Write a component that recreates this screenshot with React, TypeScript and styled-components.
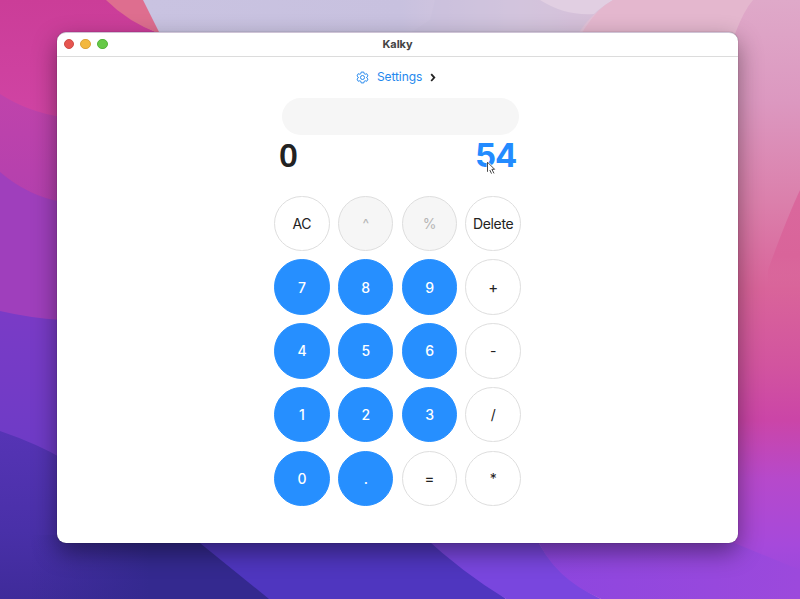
import React from 'react';
import styled, { createGlobalStyle, css } from 'styled-components';

const GlobalStyle = createGlobalStyle`
  *, *::before, *::after { box-sizing: border-box; }
  body {
    margin: 0;
    font-family: Inter, Roboto, 'Liberation Sans', sans-serif;
    color: #222;
  }
`;

const Desktop = styled.main`
  position: relative;
  isolation: isolate;
  width: 800px;
  height: 599px;
  padding: 32px 62px 56px 57px;
  overflow: hidden;
`;

const WallpaperSvg = styled.svg`
  position: absolute;
  inset: 0;
  z-index: -1;
`;

const Window = styled.section`
  display: flex;
  flex-direction: column;
  height: 511px;
  background: #fff;
  border-radius: 9px;
  border-top: 1px solid #cfc4d6;
  box-shadow: 0 0 1px rgba(0, 0, 0, 0.55), 0 9px 25px rgba(0, 0, 0, 0.42);
`;

const TitleBar = styled.header`
  display: grid;
  grid-template-columns: 1fr auto 1fr;
  align-items: center;
  height: 24px;
  padding: 0 6.5px 1px;
  border-bottom: 1px solid #dcdcdc;
`;

const Lights = styled.div`
  display: flex;
  gap: 6.6px;
`;

const Light = styled.span<{ $fill: string; $rim: string }>`
  width: 10.4px;
  height: 10.4px;
  border-radius: 50%;
  background: ${(p) => p.$fill};
  border: 0.5px solid ${(p) => p.$rim};
`;

const Title = styled.h1`
  margin: 0;
  font-size: 11px;
  font-weight: 700;
  line-height: 14px;
  letter-spacing: -0.1px;
  color: #444;
`;

const Calculator = styled.div`
  display: flex;
  flex-direction: column;
  width: 247px;
  margin: 0 0 0 217px;
  padding-top: 12px;
`;

const SettingsLink = styled.a`
  display: flex;
  align-items: center;
  height: 16px;
  margin-left: 82px;
  font-size: 12px;
  line-height: 16px;
  color: #2488ee;
`;

const SettingsLabel = styled.span`
  width: 46px;
  margin: 0 7px 0 8px;
  letter-spacing: -0.1px;
`;

const Expression = styled.div`
  width: 237px;
  height: 37px;
  margin: 13px 0 0 7.5px;
  border-radius: 18.5px;
  background: #f6f6f6;
`;

const Results = styled.div`
  display: flex;
  justify-content: space-between;
  align-items: center;
  height: 40px;
  padding: 0 5px 0 5px;
  font-size: 33px;
  line-height: 40px;
`;

const Current = styled.span`
  font-family: 'Noto Sans', sans-serif;
  font-weight: 600;
  color: #222;
`;

const Answer = styled.strong`
  position: relative;
  font-weight: 700;
  letter-spacing: -1.2px;
  color: #238bff;
`;

const PointerSvg = styled.svg`
  position: absolute;
  left: 11px;
  top: 26px;
`;

const Keypad = styled.div`
  display: grid;
  grid-template-columns: repeat(4, 55.6px);
  grid-auto-rows: 55.6px;
  gap: 8.2px;
  margin-top: 20.5px;
`;

type Tone = 'digit' | 'plain' | 'muted' | 'operator';

const tones = {
  digit: css`
    color: #fff;
    background: #268fff;
    border-color: #268fff;
    font-weight: 500;
  `,
  plain: css`
    color: #222;
    background: #fff;
  `,
  operator: css`
    color: #222;
    background: #fff;
    font-size: 15px;
    font-weight: 400;
  `,
  muted: css`
    color: #b5b5b5;
    background: #f6f6f6;
  `,
};

const Key = styled.button<{ $tone: Tone }>`
  display: flex;
  align-items: center;
  justify-content: center;
  padding: 1px 0 0;
  border: 1px solid #dedede;
  border-radius: 50%;
  font: 400 14px/18px Inter, Roboto, sans-serif;
  letter-spacing: -0.35px;
  white-space: nowrap;
  ${(p) => tones[p.$tone]}
`;

const keys: [string, Tone][] = [
  ['AC', 'plain'], ['^', 'muted'], ['%', 'muted'], ['Delete', 'plain'],
  ['7', 'digit'], ['8', 'digit'], ['9', 'digit'], ['+', 'operator'],
  ['4', 'digit'], ['5', 'digit'], ['6', 'digit'], ['-', 'plain'],
  ['1', 'digit'], ['2', 'digit'], ['3', 'digit'], ['/', 'plain'],
  ['0', 'digit'], ['.', 'digit'], ['=', 'operator'], ['*', 'plain'],
];

function Wallpaper() {
  return (
    <WallpaperSvg width="800" height="599" viewBox="0 0 800 599" aria-hidden="true">
      <defs>
        <linearGradient id="sky" x1="0" x2="1" y1="0" y2="0">
          <stop offset="0.18" stopColor="#c9c3e1" />
          <stop offset="0.5" stopColor="#c8c1df" />
          <stop offset="0.65" stopColor="#dcc9de" />
          <stop offset="0.8" stopColor="#e6bdd3" />
        </linearGradient>
        <linearGradient id="left" x1="0" x2="0" y1="0" y2="120" gradientUnits="userSpaceOnUse">
          <stop offset="0" stopColor="#cb3d98" />
          <stop offset="1" stopColor="#d044a4" />
        </linearGradient>
        <linearGradient id="plum" x1="0" x2="0" y1="95" y2="210" gradientUnits="userSpaceOnUse">
          <stop offset="0" stopColor="#bf43ab" />
          <stop offset="1" stopColor="#b340ae" />
        </linearGradient>
        <linearGradient id="right" x1="0" x2="0" y1="0" y2="599" gradientUnits="userSpaceOnUse">
          <stop offset="0" stopColor="#dfa9c9" />
          <stop offset="0.17" stopColor="#dc98c0" />
          <stop offset="0.34" stopColor="#db7fab" />
          <stop offset="0.48" stopColor="#d9649a" />
          <stop offset="0.61" stopColor="#d2549f" />
          <stop offset="0.7" stopColor="#cb45a7" />
          <stop offset="0.8" stopColor="#b649cb" />
          <stop offset="0.91" stopColor="#a649db" />
          <stop offset="1" stopColor="#9348dc" />
        </linearGradient>
        <linearGradient id="ridge" x1="0" x2="0" y1="190" y2="300" gradientUnits="userSpaceOnUse">
          <stop offset="0" stopColor="#da689d" />
          <stop offset="0.6" stopColor="#d9649a" />
          <stop offset="1" stopColor="#d9649a" stopOpacity="0" />
        </linearGradient>
        <linearGradient id="violet" x1="0" x2="0" y1="310" y2="450" gradientUnits="userSpaceOnUse">
          <stop offset="0" stopColor="#7a3bc6" />
          <stop offset="1" stopColor="#6e3bc6" />
        </linearGradient>
        <linearGradient id="indigo" x1="0" x2="0" y1="430" y2="599" gradientUnits="userSpaceOnUse">
          <stop offset="0" stopColor="#5634b5" />
          <stop offset="0.6" stopColor="#4930a8" />
          <stop offset="1" stopColor="#3f2b9a" />
        </linearGradient>
        <linearGradient id="deep" x1="30" x2="150" y1="0" y2="0" gradientUnits="userSpaceOnUse">
          <stop offset="0" stopColor="#34298f" stopOpacity="0" />
          <stop offset="1" stopColor="#34298f" />
        </linearGradient>
        <linearGradient id="orchid" x1="530" x2="800" y1="0" y2="0" gradientUnits="userSpaceOnUse">
          <stop offset="0" stopColor="#8c46df" />
          <stop offset="1" stopColor="#9c49dc" />
        </linearGradient>
      </defs>
      <rect width="800" height="599" fill="url(#sky)" />
      <path d="M435 0H613Q586 17 575 40H400L430 20Z" fill="#c8bfdc" opacity="0.45" />
      <path d="M540 0H613Q600 8 594 14Q565 16 540 0Z" fill="#e1cfe2" />
      <path d="M613 0H800V80H560Q584 15 613 0Z" fill="#e4b7ce" />
      <path d="M753 0H800V599H715V100Q735 20 753 0Z" fill="url(#right)" />
      <path d="M800 190Q786 220 768 270V300H800Z" fill="url(#ridge)" />
      <path d="M0 0H108Q128 20 158 33V330H0Z" fill="url(#left)" />
      <path d="M106 0H143L160 34Q128 22 106 0Z" fill="#de6e8f" />
      <path d="M0 94Q28 112 62 117V230H0Z" fill="url(#plum)" />
      <path d="M0 172Q28 196 62 202V330H0Z" fill="#9f3fbc" />
      <path d="M0 311Q30 318 62 320V470H0Z" fill="url(#violet)" />
      <path d="M0 431Q38 444 65 460L210 543L270 599H0Z" fill="url(#indigo)" />
      <path d="M0 535H200L270 599H0Z" fill="url(#deep)" />
      <path d="M190 535L269 599H506L430 535Z" fill="#4f36bf" />
      <path d="M422 535Q463 573 506 599H601Q553 575 535 535Z" fill="#7946de" />
      <path d="M535 535Q553 578 601 599H800V570L715 535Z" fill="url(#orchid)" />
    </WallpaperSvg>
  );
}

function Gear() {
  return (
    <svg width="13" height="13" viewBox="0 0 24 24" fill="none" stroke="currentColor" strokeWidth="1.8" strokeLinejoin="round">
      <path d="M9.6 2h4.8l.7 3 1.8 1 3-1 2.3 4.1-2.3 2v1.8l2.3 2-2.3 4.1-3-1-1.8 1-.7 3H9.6l-.7-3-1.8-1-3 1-2.3-4.1 2.3-2v-1.8l-2.3-2L4.1 5l3 1 1.8-1Z" />
      <circle cx="12" cy="12" r="3.7" />
    </svg>
  );
}

function Chevron() {
  return (
    <svg width="6" height="9" viewBox="0 0 6 9" fill="none" stroke="#222" strokeWidth="1.8">
      <path d="M1.2 1.2 4.3 4.6 1.2 8" />
    </svg>
  );
}

function Pointer() {
  return (
    <PointerSvg width="12" height="16" viewBox="0 0 12 16" aria-hidden="true">
      <path d="M1.5 1.2V10.8L3.8 8.8 6 13 8 12 6.2 8.3H9.2Z" fill="#fff" stroke="#fff" strokeWidth="1.8" />
      <path d="M1.5 10.8V1.2L8.6 8.3H5.9L8 12.4M3.8 9 5.5 12.6" fill="none" stroke="#333" strokeWidth="0.9" />
    </PointerSvg>
  );
}

export default function App() {
  return (
    <>
      <GlobalStyle />
      <Desktop>
        <Wallpaper />
        <Window>
          <TitleBar>
            <Lights>
              <Light $fill="#e65550" $rim="#cf4b46" />
              <Light $fill="#f3b83e" $rim="#dca238" />
              <Light $fill="#66c947" $rim="#54b43b" />
            </Lights>
            <Title>Kalky</Title>
          </TitleBar>
          <Calculator>
            <SettingsLink>
              <Gear />
              <SettingsLabel>Settings</SettingsLabel>
              <Chevron />
            </SettingsLink>
            <Expression />
            <Results>
              <Current>0</Current>
              <Answer>
                54
                <Pointer />
              </Answer>
            </Results>
            <Keypad>
              {keys.map(([label, tone]) => (
                <Key key={label} type="button" $tone={tone}>{label}</Key>
              ))}
            </Keypad>
          </Calculator>
        </Window>
      </Desktop>
    </>
  );
}
